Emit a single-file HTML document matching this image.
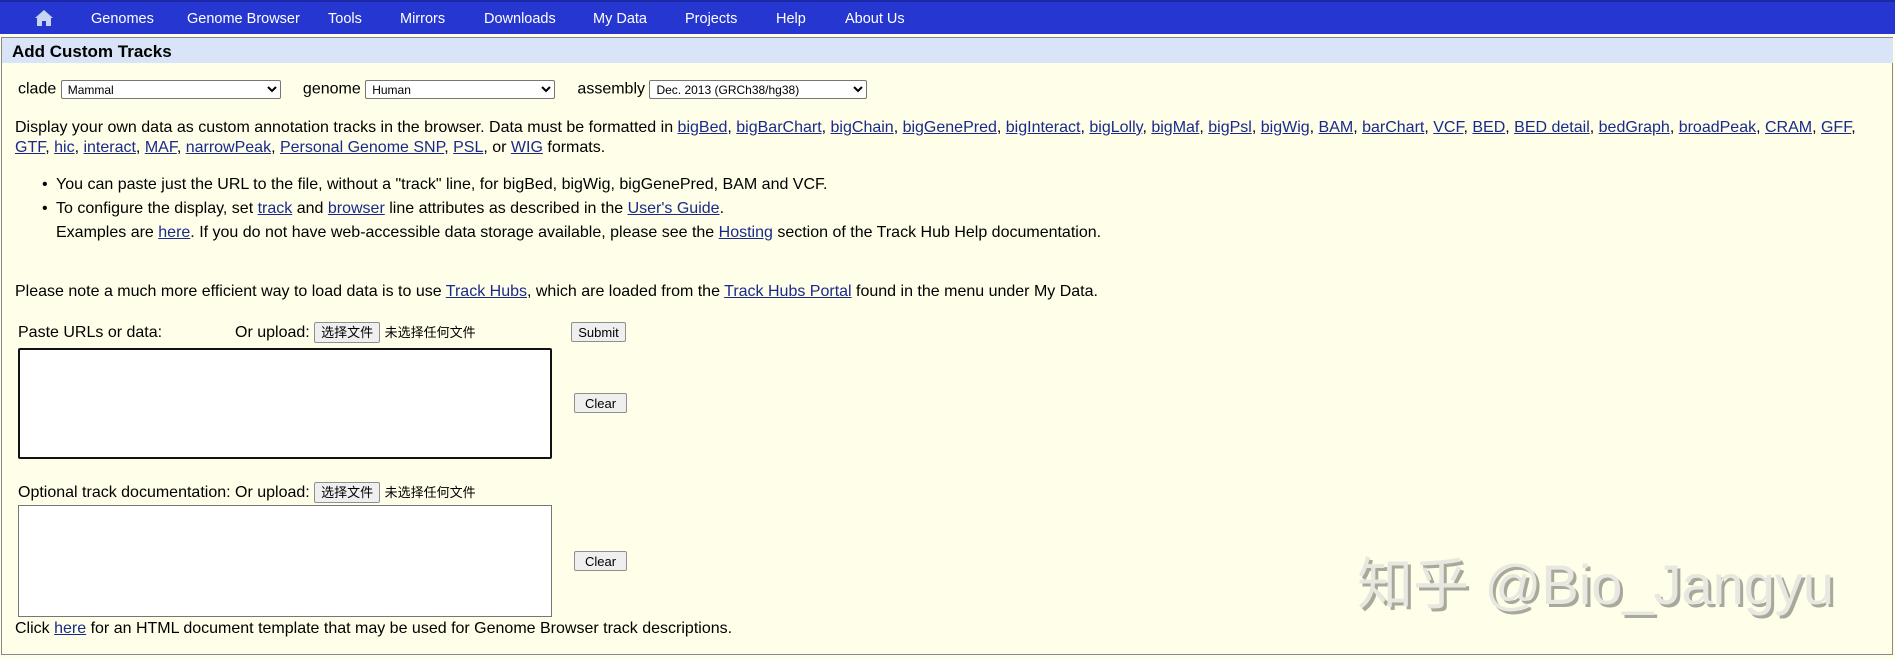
<!DOCTYPE html>
<html><head><meta charset="utf-8">
<style>
body{margin:0;width:1895px;height:659px;overflow:hidden;background:#fffee8;font-family:"Liberation Sans","Noto Sans CJK SC",sans-serif;font-size:16px;color:#000;position:relative}
.nav{position:absolute;left:0;top:0;width:1895px;height:34px;background:#2636d0;border-top:2px solid #1a28a8;box-sizing:border-box}
.nav span{position:absolute;top:9px;color:#fff;font-size:14.5px}
.frame{position:absolute;left:1px;top:37px;width:1892px;height:618px;border:1px solid #888;box-sizing:border-box}
.title{position:absolute;left:2px;top:38px;width:1891px;height:25px;background:#d9e4f8;font-weight:bold;font-size:17px;padding-left:10px;box-sizing:border-box;line-height:27px}
.t{position:absolute;white-space:nowrap}
a{color:#1a2a8c;text-decoration:underline}
select{font-family:"Liberation Sans",sans-serif;font-size:12px;height:19px;border:1px solid #767676;background:#fff;padding:0 2px;border-radius:2px}
.btn{position:absolute;background:#efefef;border:1px solid #8f8f8f;border-radius:2px;font-size:13px;text-align:center;line-height:20px;height:20px;box-sizing:border-box}
.file{display:inline-block;background:#efefef;border:1px solid #8f8f8f;border-radius:2px;font-size:13px;padding:0 6px;line-height:19px;vertical-align:middle}
.ta{position:absolute;background:#fff;box-sizing:border-box}
</style></head><body>
<div class="nav">
<svg style="position:absolute;left:34px;top:7px" width="20" height="18" viewBox="0 0 20 18"><path d="M10 1 L1 9 L3 9 L3 17 L8 17 L8 12 L12 12 L12 17 L17 17 L17 9 L19 9 Z" fill="#c8d4f0"/></svg>
<span style="left:91px">Genomes</span><span style="left:187px">Genome Browser</span><span style="left:328px">Tools</span><span style="left:400px">Mirrors</span><span style="left:484px">Downloads</span><span style="left:593px">My Data</span><span style="left:685px">Projects</span><span style="left:776px">Help</span><span style="left:845px">About Us</span>
</div>
<div class="frame"></div>
<div class="title">Add Custom Tracks</div>
<div class="t" style="left:18px;top:80px">clade <select style="width:220px"><option>Mammal</option></select>&nbsp;&nbsp;&nbsp;&nbsp; genome <select style="width:190px"><option>Human</option></select>&nbsp;&nbsp;&nbsp;&nbsp; assembly <select style="width:218px"><option>Dec. 2013 (GRCh38/hg38)</option></select></div>
<div class="t" style="left:15px;top:118px;line-height:20px">Display your own data as custom annotation tracks in the browser. Data must be formatted in <a>bigBed</a>, <a>bigBarChart</a>, <a>bigChain</a>, <a>bigGenePred</a>, <a>bigInteract</a>, <a>bigLolly</a>, <a>bigMaf</a>, <a>bigPsl</a>, <a>bigWig</a>, <a>BAM</a>, <a>barChart</a>, <a>VCF</a>, <a>BED</a>, <a>BED detail</a>, <a>bedGraph</a>, <a>broadPeak</a>, <a>CRAM</a>, <a>GFF</a>,<br><a>GTF</a>, <a>hic</a>, <a>interact</a>, <a>MAF</a>, <a>narrowPeak</a>, <a>Personal Genome SNP</a>, <a>PSL</a>, or <a>WIG</a> formats.</div>
<div class="t" style="left:42px;top:173px;line-height:24px">•</div>
<div class="t" style="left:42px;top:197px;line-height:24px">•</div>
<div class="t" style="left:56px;top:173px;line-height:24px">You can paste just the URL to the file, without a "track" line, for bigBed, bigWig, bigGenePred, BAM and VCF.<br>To configure the display, set <a>track</a> and <a>browser</a> line attributes as described in the <a>User's Guide</a>.<br>Examples are <a>here</a>. If you do not have web-accessible data storage available, please see the <a>Hosting</a> section of the Track Hub Help documentation.</div>
<div class="t" style="left:15px;top:283px">Please note a much more efficient way to load data is to use <a>Track Hubs</a>, which are loaded from the <a>Track Hubs Portal</a> found in the menu under My Data.</div>
<div class="t" style="left:18px;top:324px">Paste URLs or data:</div>
<div class="t" style="left:235px;top:322px">Or upload: <span class="file">选择文件</span> <span style="font-size:13px">未选择任何文件</span></div>
<div class="btn" style="left:571px;top:322px;width:55px">Submit</div>
<div class="ta" style="left:18px;top:348px;width:534px;height:111px;border:2px solid #111;border-radius:2px"></div>
<div class="btn" style="left:574px;top:393px;width:53px">Clear</div>
<div class="t" style="left:18px;top:482px">Optional track documentation: Or upload: <span class="file">选择文件</span> <span style="font-size:13px">未选择任何文件</span></div>
<div class="ta" style="left:18px;top:505px;width:534px;height:112px;border:1px solid #767676"></div>
<div class="btn" style="left:574px;top:551px;width:53px">Clear</div>
<div class="t" style="left:15px;top:620px">Click <a>here</a> for an HTML document template that may be used for Genome Browser track descriptions.</div>
<div class="t" style="left:1357px;top:540px;font-size:56px;color:#e8e8e0;text-shadow:3px 3px 0 #a8a89c;font-family:'Liberation Sans','Noto Sans CJK SC',sans-serif">知乎 @Bio_Jangyu</div>
</body></html>
